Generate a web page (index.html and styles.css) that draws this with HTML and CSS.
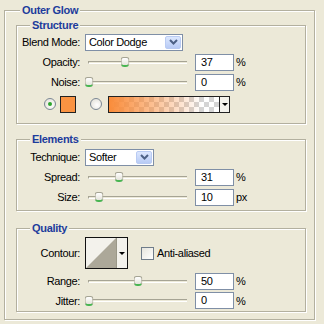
FILE: index.html
```html
<!DOCTYPE html>
<html lang="en">
<head>
    <meta charset="UTF-8">
    <title>Outer Glow</title>
    <link rel="stylesheet" href="styles.css">
</head>
<body>
    <fieldset class="group outer">
        <legend>Outer Glow</legend>

        <fieldset class="group section structure">
            <legend>Structure</legend>
            <div class="row">
                <span class="label">Blend Mode:</span>
                <div class="select select-wide">
                    <span class="select-text">Color Dodge</span>
                    <span class="select-btn">
                        <svg width="9" height="6" viewBox="0 0 9 6"><path d="M1 1l3.5 3.5L8 1" fill="none" stroke="#4d6185" stroke-width="2"/></svg>
                    </span>
                </div>
            </div>
            <div class="row">
                <span class="label">Opacity:</span>
                <div class="slider"><div class="track"><span class="thumb" style="left: 37%"></span></div></div>
                <span class="field">37</span>
                <span class="unit">%</span>
            </div>
            <div class="row">
                <span class="label">Noise:</span>
                <div class="slider"><div class="track"><span class="thumb" style="left: 0%"></span></div></div>
                <span class="field">0</span>
                <span class="unit">%</span>
            </div>
            <div class="row row-color">
                <span class="radio checked"></span>
                <span class="swatch"></span>
                <span class="radio radio-gap"></span>
                <div class="gradient">
                    <span class="gradient-fill"></span>
                    <span class="gradient-btn"><span class="caret"></span></span>
                </div>
            </div>
        </fieldset>

        <fieldset class="group section elements">
            <legend>Elements</legend>
            <div class="row">
                <span class="label">Technique:</span>
                <div class="select select-short">
                    <span class="select-text">Softer</span>
                    <span class="select-btn">
                        <svg width="9" height="6" viewBox="0 0 9 6"><path d="M1 1l3.5 3.5L8 1" fill="none" stroke="#4d6185" stroke-width="2"/></svg>
                    </span>
                </div>
            </div>
            <div class="row">
                <span class="label">Spread:</span>
                <div class="slider"><div class="track"><span class="thumb" style="left: 31%"></span></div></div>
                <span class="field">31</span>
                <span class="unit">%</span>
            </div>
            <div class="row">
                <span class="label">Size:</span>
                <div class="slider"><div class="track"><span class="thumb" style="left: 10%"></span></div></div>
                <span class="field">10</span>
                <span class="unit">px</span>
            </div>
        </fieldset>

        <fieldset class="group section quality">
            <legend>Quality</legend>
            <div class="row row-contour">
                <span class="label">Contour:</span>
                <div class="contour">
                    <svg class="contour-preview" width="30" height="30" viewBox="0 0 30 30"><rect width="30" height="30" fill="#f3f2ec"/><polygon points="0,30 30,0 30,30" fill="#aca899"/></svg>
                    <span class="contour-btn"><span class="caret"></span></span>
                </div>
                <span class="checkbox"></span>
                <span class="check-label">Anti-aliased</span>
            </div>
            <div class="row">
                <span class="label">Range:</span>
                <div class="slider"><div class="track"><span class="thumb" style="left: 50%"></span></div></div>
                <span class="field">50</span>
                <span class="unit">%</span>
            </div>
            <div class="row row-last">
                <span class="label">Jitter:</span>
                <div class="slider"><div class="track"><span class="thumb" style="left: 0%"></span></div></div>
                <span class="field">0</span>
                <span class="unit">%</span>
            </div>
        </fieldset>
    </fieldset>
</body>
</html>
```

FILE: styles.css
```css
:root {
    --face: #ECE9D8;
    --etch: #b3b09f;
    --title: #1d3c9c;
    --edit-border: #7f8fa6;
}

* {
    box-sizing: border-box;
}

body {
    margin: 0;
    width: 324px;
    height: 324px;
    overflow: hidden;
    background: var(--face);
    color: #000;
    font: 11px 'Liberation Sans', Tahoma, Arial, sans-serif;
    letter-spacing: -0.35px;
}

/* etched group boxes */
.group {
    margin: 0;
    padding: 0;
    min-width: 0;
    border: 1px solid var(--etch);
    box-shadow: inset 1px 1px 0 #fff, 1px 1px 0 #fff;
}

.group > legend {
    margin-left: 13px;
    padding: 0 2px;
    line-height: 14px;
    font-weight: bold;
    letter-spacing: -0.3px;
    color: var(--title);
    background: var(--face);
}

.outer {
    margin: 3px 9px 0 4px;
    padding: 0 8px 7px 11px;
}

.outer > legend {
    margin-left: 4px;
}

.structure {
    margin-top: 1px;
    padding-bottom: 7px;
}

.elements {
    margin-top: 8px;
    padding-top: 1px;
    padding-bottom: 3px;
}

.quality {
    margin-top: 10px;
    padding-bottom: 1px;
}

/* rows */
.row {
    display: flex;
    align-items: center;
    height: 20px;
}

.row-color {
    height: 24px;
    padding-left: 27px;
}

.row-contour {
    height: 36px;
}

.row-last {
    height: 19px;
}

.label {
    flex: 0 0 63px;
    margin-right: 5px;
    text-align: right;
    white-space: nowrap;
}

/* dropdowns */
.select {
    display: flex;
    align-items: center;
    height: 17px;
    padding: 0 1px 0 0;
    border: 1px solid var(--edit-border);
    background: #fff;
}

.select-wide {
    width: 98px;
}

.select-short {
    width: 69px;
}

.select-text {
    flex: 1;
    padding-left: 3px;
    white-space: nowrap;
}

.select-btn {
    display: flex;
    align-items: center;
    justify-content: center;
    width: 16px;
    height: 13px;
    border: 1px solid #b9cbf3;
    border-radius: 2px;
    background: linear-gradient(#dce7fe, #b8cbf5);
}

/* sliders */
.slider {
    display: flex;
    align-items: center;
    width: 105px;
    height: 14px;
    padding: 0 3px;
}

.track {
    position: relative;
    flex: 1;
    height: 3px;
    border-top: 1px solid #a6a494;
    border-left: 1px solid #a6a494;
    border-bottom: 1px solid #fff;
}

.thumb {
    position: absolute;
    top: 50%;
    width: 9px;
    height: 10px;
    transform: translate(-50%, -50%);
    border: 1px solid #a5a494;
    border-bottom: 2px solid #48b552;
    border-radius: 3px 3px 4px 4px;
    background: linear-gradient(#fff, #e4e3da);
}

.field {
    width: 39px;
    height: 17px;
    margin-left: 5px;
    padding-left: 5px;
    line-height: 15px;
    border: 1px solid var(--edit-border);
    background: #fff;
}

.unit {
    margin-left: 2px;
}

/* colour row */
.radio {
    width: 12px;
    height: 12px;
    border: 1px solid #7b8794;
    border-radius: 50%;
    background: radial-gradient(circle at 60% 60%, #fff, #dedcd2);
}

.radio.checked {
    display: grid;
    place-items: center;
}

.radio.checked::after {
    content: "";
    width: 4px;
    height: 4px;
    border-radius: 50%;
    background: #2ea52e;
}

.radio-gap {
    margin-left: 14px;
}

.swatch {
    width: 16px;
    height: 17px;
    margin-left: 4px;
    border: 1px solid #222;
    background: #fa9342;
}

.gradient {
    display: flex;
    width: 122px;
    height: 17px;
    margin-left: 6px;
    border: 1px solid #222;
}

.gradient-fill {
    flex: 1;
    background:
        linear-gradient(to right, rgba(250, 140, 58, 1), rgba(250, 140, 58, 0.55) 40%, rgba(250, 140, 58, 0) 85%),
        conic-gradient(#fff 25%, #d4d4d4 0 50%, #fff 0 75%, #d4d4d4 0) 0 0 / 10px 10px;
}

.gradient-btn,
.contour-btn {
    display: flex;
    align-items: center;
    justify-content: center;
    width: 10px;
    border-left: 1px solid #222;
    background: #f3f2ec;
}

.caret {
    width: 0;
    height: 0;
    border-left: 3px solid transparent;
    border-right: 3px solid transparent;
    border-top: 3px solid #000;
}

/* contour */
.contour {
    display: flex;
    width: 43px;
    height: 32px;
    border: 1px solid #111;
}

.contour-preview {
    display: block;
}

.contour-btn {
    flex: 1;
    border-left-color: #9a9888;
}

.checkbox {
    width: 13px;
    height: 13px;
    margin-left: 13px;
    border: 1px solid #6f7c8a;
    background: linear-gradient(135deg, #e6e5de, #fff);
}

.check-label {
    margin-left: 3px;
}
```
